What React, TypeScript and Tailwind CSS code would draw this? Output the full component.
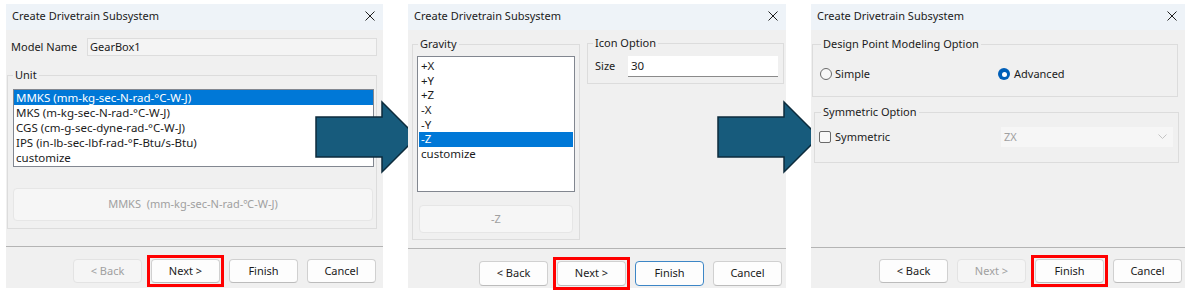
import React from 'react';

const CloseIcon = () => (
    <svg width="10" height="10" viewBox="0 0 10 10">
        <path d="M0.5 0.5L9.5 9.5M9.5 0.5L0.5 9.5" stroke="#1f1f1f" strokeWidth="1" />
    </svg>
);

const Dialog: React.FC<{ width: string; z: string; children: React.ReactNode }> = ({ width, z, children }) => (
    <div className={`relative flex flex-col h-[284px] bg-[#f0f0f0] ${width} ${z}`}>
        <div className="h-[26px] shrink-0 flex items-center justify-between pl-[6px] pr-[8px] pb-[2px] bg-[#eef3f8] text-[#1b1b1b]">
            <span>Create Drivetrain Subsystem</span>
            <CloseIcon />
        </div>
        {children}
    </div>
);

type Btn = { label: string; disabled?: boolean; red?: boolean; focus?: boolean };

const Footer: React.FC<{ buttons: Btn[]; btnH: string; pt: string; pr: string }> = ({ buttons, btnH, pt, pr }) => (
    <div className={`border-t border-[#b4b4b4] flex justify-end gap-[9px] ${pt} ${pr}`}>
        {buttons.map(b => (
            <button
                key={b.label}
                className={`relative w-[69px] ${btnH} rounded-[4px] border ${b.disabled
                    ? 'bg-[#f5f5f5] border-[#e3e3e3] text-[#a0a0a0]'
                    : b.focus
                        ? 'bg-[#fdfdfd] border-[#3d86c6] text-[#1b1b1b]'
                        : 'bg-[#fdfdfd] border-[#d0d0d0] border-b-[#bcbcbc] text-[#1b1b1b]'
                    }`}
            >
                {b.label}
                {b.red && <span className="absolute -inset-[5px] border-[3px] border-[#ff0000]" />}
            </button>
        ))}
    </div>
);

const Legend: React.FC<{ ml: string; children: React.ReactNode }> = ({ ml, children }) => (
    <legend className={`${ml} px-[2px] leading-[14px] text-[#1b1b1b]`}>{children}</legend>
);

const unitItems = [
    'MMKS (mm-kg-sec-N-rad-°C-W-J)',
    'MKS (m-kg-sec-N-rad-°C-W-J)',
    'CGS (cm-g-sec-dyne-rad-°C-W-J)',
    'IPS (in-lb-sec-lbf-rad-°F-Btu/s-Btu)',
    'customize',
];

const gravityItems = ['+X', '+Y', '+Z', '-X', '-Y', '-Z', 'customize'];

const Arrow: React.FC<{ x: number; z: string }> = ({ x, z }) => (
    <svg className={`absolute left-0 top-0 ${z}`} width="1191" height="292">
        <path
            d={`M${x} 117 H${x + 66} V102 L${x + 101} 137 L${x + 66} 172 V157 H${x} Z`}
            fill="#175b7c"
            stroke="#0c2b3c"
            strokeWidth="1.5"
        />
    </svg>
);

export default function App() {
    return (
        <div className="relative w-[1191px] h-[292px] bg-white overflow-hidden font-['Noto_Sans',sans-serif] text-[11px] text-[#1b1b1b]">
            <Arrow x={316} z="z-[20]" />
            <Arrow x={718} z="z-[40]" />

            <div className="flex pt-[4px] pl-[6px] gap-[25px]">
                {/* Step 1: model name + unit */}
                <Dialog width="w-[377px]" z="z-[10]">
                    <div className="h-[216px] flex flex-col">
                        <div className="mt-[8px] flex items-center">
                            <span className="pl-[5px] w-[81px]">Model Name</span>
                            <div className="w-[290px] h-[18px] bg-[#f4f4f4] border border-[#dddddd] flex items-center pl-[2px]">GearBox1</div>
                        </div>
                        <fieldset className="mt-[12px] ml-[1px] w-[370px] h-[161px] border border-[#dcdcdc]">
                            <Legend ml="ml-[5px]">Unit</Legend>
                            <div className="mt-[7px] ml-[5px] w-[361px] h-[78px] bg-white border border-[#828790] text-[11.5px]">
                                {unitItems.map((u, i) => (
                                    <div key={u} className={`h-[15px] leading-[15px] pl-[2px] ${i === 0 ? 'bg-[#0078d7] text-white' : ''}`}>{u}</div>
                                ))}
                            </div>
                            <div className="mt-[21px] ml-[5px] w-[360px] h-[33px] rounded-[4px] bg-[#f6f6f6] border border-[#e6e6e6] flex items-center justify-center text-[#a0a0a0]">
                                MMKS&nbsp;&nbsp;(mm-kg-sec-N-rad-℃-W-J)
                            </div>
                        </fieldset>
                    </div>
                    <Footer
                        btnH="h-[24px]"
                        pt="pt-[12px]"
                        pr="pr-[7px]"
                        buttons={[
                            { label: '< Back', disabled: true },
                            { label: 'Next >', red: true },
                            { label: 'Finish' },
                            { label: 'Cancel' },
                        ]}
                    />
                </Dialog>

                {/* Step 2: gravity + icon option */}
                <Dialog width="w-[378px]" z="z-[30]">
                    <div className="h-[218px] flex items-start">
                        <fieldset className="mt-[7px] ml-[4px] w-[168px] h-[203px] border border-[#dcdcdc]">
                            <Legend ml="ml-[5px]">Gravity</Legend>
                            <div className="mt-[5px] ml-[4px] w-[158px] h-[136px] bg-white border border-[#828790] pt-[2px] px-[1px] text-[11.5px]">
                                {gravityItems.map((g, i) => (
                                    <div key={g} className={`h-[14.7px] leading-[14.7px] pl-[2px] overflow-hidden ${i === 5 ? 'bg-[#0078d7] text-white' : ''}`}>{g}</div>
                                ))}
                            </div>
                            <div className="mt-[13px] ml-[6px] w-[154px] h-[28px] rounded-[4px] bg-[#f6f6f6] border border-[#e6e6e6] flex items-center justify-center text-[#a0a0a0]">
                                -Z
                            </div>
                        </fieldset>
                        <fieldset className="mt-[6px] ml-[7px] w-[197px] h-[48px] border border-[#dcdcdc]">
                            <Legend ml="ml-[5px]">Icon Option</Legend>
                            <div className="mt-[6px] flex items-center pl-[7px]">
                                <span className="w-[33px]">Size</span>
                                <div className="w-[150px] h-[21px] bg-white border-b border-[#8a8a8a] flex items-center pl-[3px] text-[11.5px]">30</div>
                            </div>
                        </fieldset>
                    </div>
                    <Footer
                        btnH="h-[25px]"
                        pt="pt-[12px]"
                        pr="pr-[4px]"
                        buttons={[
                            { label: '< Back' },
                            { label: 'Next >', red: true },
                            { label: 'Finish', focus: true },
                            { label: 'Cancel' },
                        ]}
                    />
                </Dialog>

                {/* Step 3: design point + symmetric */}
                <Dialog width="w-[374px]" z="z-[50]">
                    <div className="h-[217px] flex flex-col">
                        <fieldset className="mt-[7px] ml-[1px] w-[366px] h-[60px] border border-[#dcdcdc]">
                            <Legend ml="ml-[8px]">Design Point Modeling Option</Legend>
                            <div className="mt-[16px] flex items-center pl-[7px] h-[14px]">
                                <div className="w-[178px] flex items-center gap-[3px]">
                                    <span className="w-[12px] h-[12px] rounded-full border border-[#6a6a6a] bg-[#f8f8f8]" />
                                    <span>Simple</span>
                                </div>
                                <div className="flex items-center gap-[4px]">
                                    <span className="w-[12px] h-[12px] rounded-full bg-[#005fb8] flex items-center justify-center">
                                        <span className="w-[5px] h-[5px] rounded-full bg-white" />
                                    </span>
                                    <span>Advanced</span>
                                </div>
                            </div>
                        </fieldset>
                        <fieldset className="mt-[8px] ml-[3px] w-[365px] h-[58px] border border-[#dcdcdc]">
                            <Legend ml="ml-[6px]">Symmetric Option</Legend>
                            <div className="mt-[8px] flex items-center pl-[4px] h-[20px]">
                                <div className="w-[182px] flex items-center gap-[4px]">
                                    <span className="w-[12px] h-[12px] rounded-[2px] border border-[#6a6a6a] bg-[#f8f8f8]" />
                                    <span>Symmetric</span>
                                </div>
                                <div className="w-[172px] h-[20px] bg-[#f6f6f6] flex items-center justify-between pl-[3px] pr-[6px] text-[#a0a0a0]">
                                    <span>ZX</span>
                                    <svg width="9" height="6" viewBox="0 0 9 6">
                                        <path d="M0.5 0.5L4.5 4.5L8.5 0.5" fill="none" stroke="#c4c4c4" strokeWidth="1" />
                                    </svg>
                                </div>
                            </div>
                        </fieldset>
                    </div>
                    <Footer
                        btnH="h-[24px]"
                        pt="pt-[11px]"
                        pr="pr-[3px]"
                        buttons={[
                            { label: '< Back' },
                            { label: 'Next >', disabled: true },
                            { label: 'Finish', red: true },
                            { label: 'Cancel' },
                        ]}
                    />
                </Dialog>
            </div>
        </div>
    );
}
